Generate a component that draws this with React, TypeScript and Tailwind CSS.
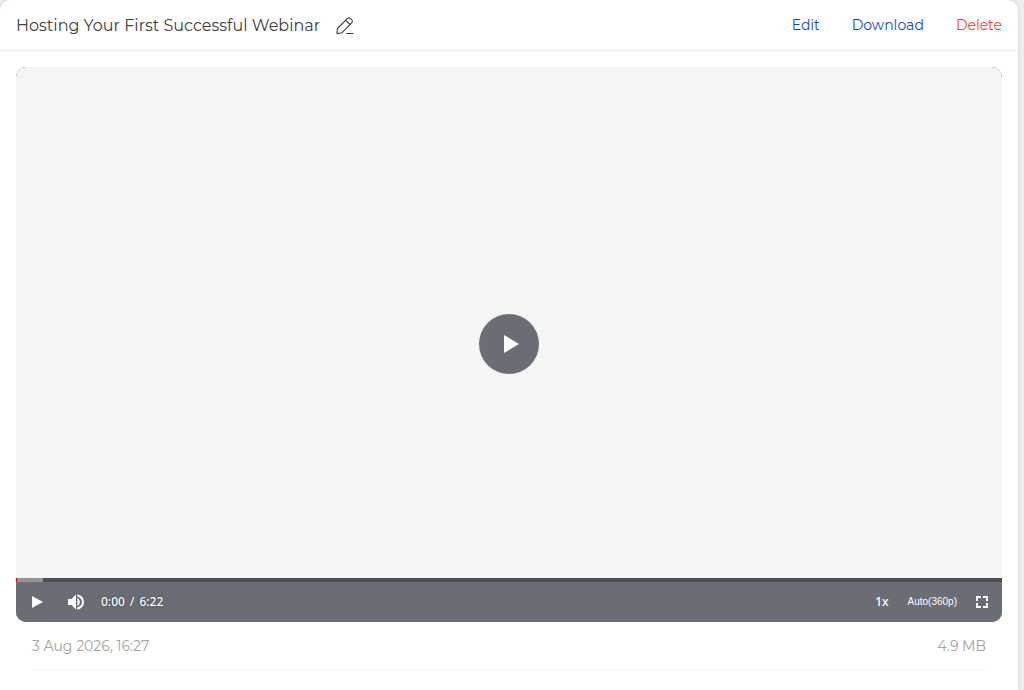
import React from 'react';

const actions = [
    { label: 'Edit', color: 'text-[#1249bb]' },
    { label: 'Download', color: 'text-[#1249bb]' },
    { label: 'Delete', color: 'text-[#ff3b30]' },
];

const PencilIcon = () => (
    <svg width="18" height="18" viewBox="0 0 18 18" fill="none" stroke="currentColor" strokeWidth="1.1" strokeLinecap="round" strokeLinejoin="round">
        <path d="M1 16.6 L1.3 12.4 C1.4 11.8 1.6 11.4 2 11 L11.3 1.7 C12.2 0.8 13.6 0.8 14.6 1.7 L15.6 2.7 C16.6 3.7 16.6 5 15.7 5.9 L6.3 15.3 C5.9 15.7 5.5 15.9 4.9 16 Z" />
        <path d="M9.7 3.3 L14.1 7.5" />
        <path d="M10.5 16.5 H17" />
    </svg>
);

const PlayIcon = ({ className }: { className: string }) => (
    <svg className={className} viewBox="0 0 11 14" fill="currentColor" preserveAspectRatio="none">
        <path d="M0 0v14l11-7z" />
    </svg>
);

const VolumeIcon = () => (
    <svg width="16" height="16" viewBox="3 3 18 18" fill="currentColor">
        <path d="M3 8.5v7h4l5 5V3.5l-5 5H3z" />
        <path d="M13.5 7.5v9c1.7-.8 2.8-2.5 2.8-4.5s-1.1-3.7-2.8-4.5z" />
        <path d="M13.5 3.4v2.3c2.9.7 5.2 3.1 5.2 6.3s-2.3 5.6-5.2 6.3v2.3c4.3-.8 7.5-4.3 7.5-8.6s-3.2-7.8-7.5-8.6z" />
    </svg>
);

const FullscreenIcon = () => (
    <svg width="12" height="12" viewBox="0 0 12 12" fill="none" stroke="currentColor" strokeWidth="2">
        <path d="M1 5V1h4M7 1h4v4M11 7v4H7M5 11H1V7" />
    </svg>
);

const VideoPlayer = () => (
    <div className="relative flex aspect-video w-full flex-col overflow-hidden rounded-[10px] bg-[#777777]">
        <div className="flex-1 rounded-t-[10px] bg-[#f5f5f5]" />
        <button
            aria-label="Play video"
            className="absolute inset-0 m-auto flex size-15 items-center justify-center rounded-full bg-[#6a6d75] text-white"
        >
            <PlayIcon className="ml-1 h-[18px] w-[15px]" />
        </button>
        <div className="flex h-1 bg-[#4e4e4e]">
            <div className="h-full w-px bg-[#f00]" />
            <div className="h-full w-[26px] bg-[#939393]" />
        </div>
        <div className="flex h-10 items-center bg-[#6a6d75] pr-[14px] pl-4 text-white text-shadow-[0_0_2px_rgba(0,0,0,0.5)]">
            <button aria-label="Play">
                <PlayIcon className="h-3 w-[11px]" />
            </button>
            <button aria-label="Mute" className="ml-[25px]">
                <VolumeIcon />
            </button>
            <div className="ml-[17px] flex gap-[5px] font-['Noto_Sans',sans-serif] text-xs font-medium">
                <span>0:00</span>
                <span>/</span>
                <span>6:22</span>
            </div>
            <div className="ml-auto flex items-center">
                <button className="font-['Noto_Sans',sans-serif] text-xs font-medium">1x</button>
                <button className="ml-[19px] font-['Liberation_Sans',Arial,sans-serif] text-[10px]">Auto(360p)</button>
                <button aria-label="Full screen" className="ml-[19px]">
                    <FullscreenIcon />
                </button>
            </div>
        </div>
    </div>
);

const App: React.FC = () => {
    return (
        <div className="min-h-screen bg-[#ededed] pr-1.5 font-['Montserrat',Inter,sans-serif]">
            <main className="min-h-screen rounded-t-[10px] bg-white shadow-[0_0_3px_rgba(0,0,0,0.15)]">
                <header className="flex h-[51px] items-center justify-between border-b border-[#ededed] px-4">
                    <div className="flex items-center gap-4 pt-0.5">
                        <h1 className="text-base text-[#404040]">Hosting Your First Successful Webinar</h1>
                        <button aria-label="Rename" className="text-[#404040]">
                            <PencilIcon />
                        </button>
                    </div>
                    <nav className="flex gap-8 text-sm">
                        {actions.map((action) => (
                            <button key={action.label} className={action.color}>
                                {action.label}
                            </button>
                        ))}
                    </nav>
                </header>
                <section className="p-4">
                    <VideoPlayer />
                    <div className="mx-4 flex h-[49px] items-center justify-between border-b-2 border-[#f8f8f8] pt-0.5 text-sm text-[#a3a3a3]">
                        <span>3 Aug 2026, 16:27</span>
                        <span>4.9 MB</span>
                    </div>
                </section>
            </main>
        </div>
    );
};

export default App;
